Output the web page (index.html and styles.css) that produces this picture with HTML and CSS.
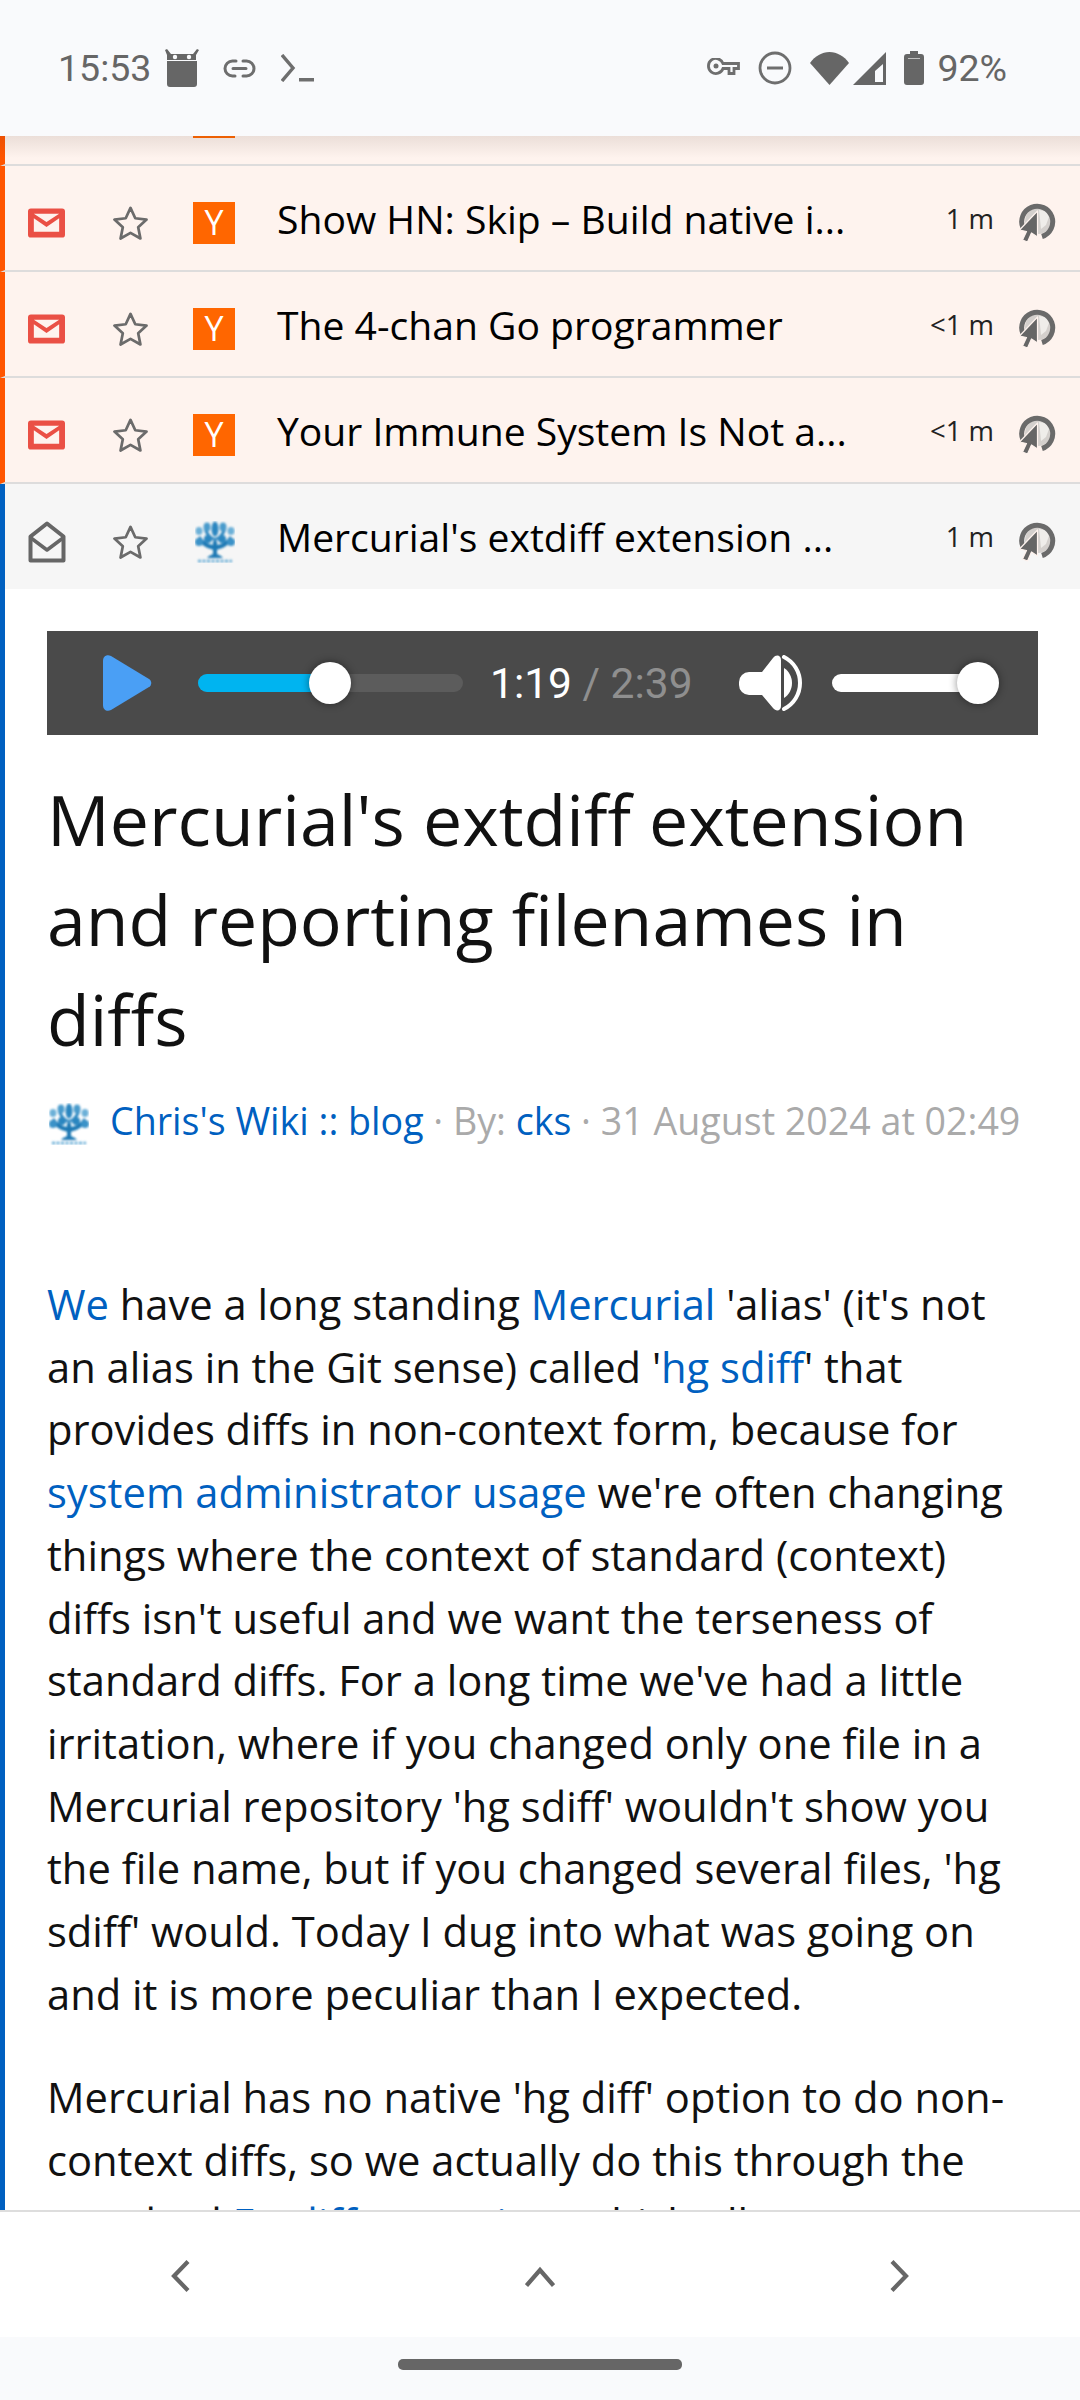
FILE: index.html
```html
<!DOCTYPE html>
<html lang="en">
<head>
<meta charset="utf-8">
<title>Mercurial's extdiff extension</title>
<link rel="stylesheet" href="styles.css">
</head>
<body>
<svg class="defs" width="0" height="0" aria-hidden="true">
  <defs>
    <filter id="soft"><feGaussianBlur stdDeviation="0.8"/></filter>
    <symbol id="star" viewBox="0 0 38 36">
      <path d="M19 2.500l4.900 10.600 11.600 1.400-8.600 7.900 2.300 11.500L19 28.100 8.800 33.900l2.300-11.500-8.600-7.900 11.600-1.400z" fill="none" stroke="#6b6b6b" stroke-width="2.800" stroke-linejoin="round"/>
    </symbol>
    <symbol id="mail" viewBox="0 0 38 30">
      <path fill-rule="evenodd" fill="#ea5045" d="M3 0h32a3 3 0 0 1 3 3v24a3 3 0 0 1-3 3H3a3 3 0 0 1-3-3V3a3 3 0 0 1 3-3zM6 5.500l13 8.500 13-8.500zM6 10v14h26V10l-13 9z"/>
    </symbol>
    <symbol id="mailopen" viewBox="0 0 38 42">
      <path fill="none" stroke="#666" stroke-width="4" stroke-linejoin="round" d="M2.500 39.500V15.500L19 2.500l16.500 13v24z"/>
      <path fill="none" stroke="#666" stroke-width="3.500" stroke-linejoin="round" d="M3 17l16 12 16-12"/>
    </symbol>
    <symbol id="ylogo" viewBox="0 0 42 42">
      <rect width="42" height="42" fill="#f60"/>
      <text x="21" y="33" text-anchor="middle" class="ytext">Y</text>
    </symbol>
    <symbol id="globe" viewBox="0 0 38 40">
      <circle cx="19" cy="18" r="13" fill="#d4d0cd"/>
      <path fill="#efedea" d="M20 7l7 1 3 6-3 8-5 4-1-10z"/>
      <path fill="none" stroke="#6a6a6a" stroke-width="5" d="M4 25a15.500 15.500 0 1 1 19 8.500"/>
      <path fill="#666" stroke="#fef3ee" stroke-width="1.200" stroke-linejoin="round" d="M18.500 8v26l-6-4-4 9-5-2 4-8.500-7-1.500z"/>
    </symbol>
    <symbol id="tree" viewBox="0 0 40 42">
      <g filter="url(#soft)">
        <path d="M18 20h4v17h-4z" fill="#1a78b4"/>
        <path d="M20 29C13 28 7 25 2 18l3-3c4 6 9 9 15 9s11-3 15-9l3 3c-5 7-11 10-18 11z" fill="#1a78b4"/>
        <path d="M20 20C15 18 11 15 9 9l3-1c2 5 4 8 8 9 4-1 6-4 8-9l3 1c-2 6-6 9-11 11z" fill="#2b86c0"/>
        <ellipse cx="20" cy="8" rx="3.500" ry="7.500" fill="#2b86c0"/>
        <ellipse cx="12" cy="6" rx="3.500" ry="4.500" fill="#4a9bcc"/>
        <ellipse cx="28" cy="6" rx="3.500" ry="4.500" fill="#4a9bcc"/>
        <ellipse cx="13" cy="18" rx="4" ry="4" fill="#2b86c0"/>
        <ellipse cx="27" cy="18" rx="4" ry="4" fill="#2b86c0"/>
        <ellipse cx="4" cy="10" rx="3.500" ry="4" fill="#6cb0d8"/>
        <ellipse cx="36" cy="10" rx="3.500" ry="4" fill="#6cb0d8"/>
        <ellipse cx="4" cy="21" rx="4" ry="4" fill="#3a92c8"/>
        <ellipse cx="36" cy="21" rx="4" ry="4" fill="#3a92c8"/>
        <path d="M12 37c3-3 5-4 8-4s5 1 8 4z" fill="#1a78b4"/>
        <path d="M3 40h34" stroke="#5ea8d4" stroke-width="2.500" stroke-dasharray="3 1.500"/>
      </g>
    </symbol>
  </defs>
</svg>

<div class="screen">
  <header class="status">
    <div class="status-side">
      <span class="clock">15:53</span>
      <svg class="s-robot" viewBox="0 0 36 38"><path fill="#666" d="M3 12h30v23a3 3 0 0 1-3 3H6a3 3 0 0 1-3-3zM1 1l2-1 4 5h22l4-5 2 1-3 5v5H3V6z"/><circle cx="11" cy="8" r="2.200" fill="#f9fafc"/><circle cx="25" cy="8" r="2.200" fill="#f9fafc"/></svg>
      <svg class="s-link" viewBox="0 0 33 19"><path fill="none" stroke="#6e6e6e" stroke-width="3" stroke-linecap="round" d="M12 17H9.500a7.500 7.500 0 0 1 0-15H13M20 2h3.500a7.500 7.500 0 0 1 0 15H20M10 9.500h13"/></svg>
      <svg class="s-term" viewBox="0 0 33 28"><path fill="none" stroke="#6e6e6e" stroke-width="3.400" d="M1 1L12 14 1 27"/><path fill="#6e6e6e" d="M18 24h15v3.500H18z"/></svg>
    </div>
    <div class="status-side">
      <svg class="s-key" viewBox="0 0 33 20"><path fill="none" stroke="#6e6e6e" stroke-width="2.800" d="M16 5.500h15.500v5H27v5h-5v-5h-6a7.500 7.500 0 1 1 0-5z"/><circle cx="9" cy="8" r="2.500" fill="#6e6e6e"/></svg>
      <svg class="s-dnd" viewBox="0 0 34 34"><circle cx="17" cy="17" r="15" fill="none" stroke="#6e6e6e" stroke-width="2.800"/><path fill="#6e6e6e" d="M9 15.500h16v3H9z"/></svg>
      <svg class="s-wifi" viewBox="0 0 39 33"><path fill="#666" d="M0 11C5 4 12 0 19.500 0S34 4 39 11L19.500 33z"/></svg>
      <svg class="s-cell" viewBox="0 0 33 33"><path fill="#666" fill-rule="evenodd" d="M33 0v33H0zM30 12l-8 7v11h8z"/></svg>
      <svg class="s-batt" viewBox="0 0 20 34"><path fill="#666" d="M6 0h8v3h3a3 3 0 0 1 3 3v25a3 3 0 0 1-3 3H3a3 3 0 0 1-3-3V6a3 3 0 0 1 3-3h3z"/><path fill="#c0c0c0" d="M4 7h12v1H4z"/></svg>
      <span class="pct">92%</span>
    </div>
  </header>

  <main class="view">
    <div class="list">
      <div class="row unread">
        <svg class="i-mail"><use href="#mail"/></svg>
        <svg class="i-star"><use href="#star"/></svg>
        <svg class="i-feed"><use href="#ylogo"/></svg>
        <span class="title"></span>
        <span class="age"></span>
        <svg class="i-globe"><use href="#globe"/></svg>
      </div>
      <div class="row unread">
        <svg class="i-mail"><use href="#mail"/></svg>
        <svg class="i-star"><use href="#star"/></svg>
        <svg class="i-feed"><use href="#ylogo"/></svg>
        <span class="title">Show HN: Skip – Build native i...</span>
        <span class="age">1 m</span>
        <svg class="i-globe"><use href="#globe"/></svg>
      </div>
      <div class="row unread">
        <svg class="i-mail"><use href="#mail"/></svg>
        <svg class="i-star"><use href="#star"/></svg>
        <svg class="i-feed"><use href="#ylogo"/></svg>
        <span class="title">The 4-chan Go programmer</span>
        <span class="age">&lt;1 m</span>
        <svg class="i-globe"><use href="#globe"/></svg>
      </div>
      <div class="row unread">
        <svg class="i-mail"><use href="#mail"/></svg>
        <svg class="i-star"><use href="#star"/></svg>
        <svg class="i-feed"><use href="#ylogo"/></svg>
        <span class="title">Your Immune System Is Not a...</span>
        <span class="age">&lt;1 m</span>
        <svg class="i-globe"><use href="#globe"/></svg>
      </div>
      <div class="row read">
        <svg class="i-open"><use href="#mailopen"/></svg>
        <svg class="i-star"><use href="#star"/></svg>
        <svg class="i-tree"><use href="#tree"/></svg>
        <span class="title">Mercurial's extdiff extension ...</span>
        <span class="age">1 m</span>
        <svg class="i-globe"><use href="#globe"/></svg>
      </div>
    </div>

    <article class="article">
      <div class="player">
        <svg class="p-play" viewBox="0 0 49 56"><path fill="#4a9ff5" d="M0 6c0-5 4-7 8-5l38 23c3 2 3 6 0 8L8 55c-4 2-8 0-8-5z"/></svg>
        <div class="track seek"><div class="fill seek-fill"></div><div class="knob"></div></div>
        <span class="time">1:19<span class="dur"> / 2:39</span></span>
        <svg class="p-vol" viewBox="0 0 63 56"><path fill="#fff" d="M10 17h13L34 3c3-4 8-3 8 2v46c0 5-5 6-8 2L23 40H10a10 10 0 0 1-10-10v-3a10 10 0 0 1 10-10z"/><path fill="#fff" d="M45 13c5 3 8 9 8 15s-3 12-8 15z"/><path fill="none" stroke="#fff" stroke-width="4" stroke-linecap="round" d="M45 2c10 5 16 15 16 26s-6 21-16 26"/></svg>
        <div class="track vol"><div class="knob"></div></div>
      </div>

      <h1 class="headline">Mercurial's extdiff extension and reporting filenames in diffs</h1>

      <div class="byline">
        <svg class="i-tree"><use href="#tree"/></svg>
        <a class="lnk">Chris's Wiki :: blog</a><span class="sep"> · By: </span><a class="lnk">cks</a><span class="sep"> · 31 August 2024 at 02:49</span>
      </div>

      <p class="para first"><a class="lnk">We</a> have a long standing <a class="lnk">Mercurial</a> 'alias' (it's not an alias in the Git sense) called '<a class="lnk">hg sdiff</a>' that provides diffs in non-context form, because for <a class="lnk">system administrator usage</a> we're often changing things where the context of standard (context) diffs isn't useful and we want the terseness of standard diffs. For a long time we've had a little irritation, where if you changed only one file in a Mercurial repository 'hg sdiff' wouldn't show you the file name, but if you changed several files, 'hg sdiff' would. Today I dug into what was going on and it is more peculiar than I expected.</p>
      <p class="para">Mercurial has no native 'hg diff' option to do non-context diffs, so we actually do this through the standard <a class="lnk">Extdiff extension</a>, which allows</p>
    </article>
    <div class="status-shadow"></div>
  </main>

  <nav class="nav">
    <svg class="n-side" viewBox="0 0 20 32"><path fill="none" stroke="#666" stroke-width="4.200" d="M18 1.500L4 16l14 14.500"/></svg>
    <svg class="n-up" viewBox="0 0 30 21"><path fill="none" stroke="#666" stroke-width="4.200" d="M1.500 19.500L15 4l13.500 15.500"/></svg>
    <svg class="n-side" viewBox="0 0 20 32"><path fill="none" stroke="#666" stroke-width="4.200" d="M2 1.500L16 16 2 30.500"/></svg>
  </nav>
  <div class="gesture"><span class="pill"></span></div>
</div>
</body>
</html>
```

FILE: styles.css
```css
* { box-sizing: border-box; }
html, body { margin: 0; padding: 0; }
body { font-family: "Open Sans", sans-serif; background: #fff; color: #000; }
.defs { position: absolute; }
.ytext { font-family: "Open Sans", sans-serif; font-size: 34px; fill: #fff; }

.screen { width: 1080px; height: 2400px; display: flex; flex-direction: column; overflow: hidden; }

.status { flex: 0 0 136px; height: 136px; background: #f9fafc; display: flex; justify-content: space-between; align-items: center; padding: 0 73px 0 58px; color: #666; font-family: Roboto, sans-serif; font-size: 37.500px; }
.status-side { display: flex; align-items: center; }
.s-robot { width: 36px; height: 38px; margin-left: 13px; }
.s-link { width: 33px; height: 19px; margin-left: 23px; }
.s-term { width: 33px; height: 28px; margin-left: 25px; }
.s-key { width: 33px; height: 20px; margin-right: 18px; }
.s-dnd { width: 34px; height: 34px; margin-right: 18px; }
.s-wifi { width: 39px; height: 33px; margin-right: 4px; }
.s-cell { width: 33px; height: 33px; margin-right: 18px; }
.s-batt { width: 20px; height: 34px; margin-right: 13px; }

.view { flex: 1; min-height: 0; position: relative; overflow: hidden; display: flex; flex-direction: column; }
.status-shadow { position: absolute; left: 0; right: 0; top: 0; height: 22px; background: linear-gradient(rgba(70,40,25,.1), rgba(70,40,25,0)); }
.list { margin-top: -76px; flex: none; }

.row { flex: none; height: 106px; display: flex; align-items: center; border-bottom: 2px solid #dddcdc; border-left: 5px solid #f50; }
.row.unread { background: #fef3ee; }
.row.read { background: #f6f6f6; border-bottom: 0; border-left-color: #0060c0; height: 105px; }
.row svg { flex: none; margin-top: 10px; }
.i-mail { width: 37px; height: 30px; margin-left: 23px; }
.i-open { width: 38px; height: 42px; margin-left: 23px; margin-right: -1px; }
.i-star { width: 37px; height: 36px; margin-left: 47px; }
.i-feed { width: 42px; height: 42px; margin-left: 44px; }
.row .i-tree { margin-left: 46px; }
.i-tree { width: 40px; height: 42px; }
.title { flex: 1; margin-left: 42px; font-size: 39.100px; white-space: nowrap; }
.age { font-size: 27.500px; color: #222; margin-right: 25px; }
.i-globe { width: 38px; height: 40px; margin-right: 23px; }

.article { flex: 1 0 auto; border-left: 5px solid #0060c0; padding: 42px 42px 0 42px; }
.player { height: 104px; background: #4a4a4a; display: flex; align-items: center; padding-left: 56px; }
.p-play { width: 49px; height: 56px; flex: none; }
.track { position: relative; height: 18px; border-radius: 9px; }
.seek { width: 265px; margin-left: 46px; background: #5c5c5c; }
.seek-fill { width: 132px; background: #00b4f0; }
.vol { width: 145px; margin-left: 30px; background: #fff; }
.fill { height: 100%; border-radius: 9px; }
.knob { position: absolute; top: -12px; width: 42px; height: 42px; border-radius: 50%; background: #fff; box-shadow: 0 0 8px rgba(0,0,0,.45); }
.seek .knob { left: 111px; }
.vol .knob { left: 125px; }
.time { font-family: Roboto, sans-serif; font-size: 42.500px; color: #fff; margin-left: 27px; white-space: nowrap; }
.dur { color: #8f8f8f; }
.p-vol { width: 63px; height: 56px; margin-left: 46px; flex: none; }

.headline { font-size: 69.800px; line-height: 100px; font-weight: 400; margin: 34px 0 0 0; color: #111; }
.byline { display: flex; align-items: center; margin-top: 26px; font-size: 37.600px; color: #aaa; white-space: pre; }
.byline .i-tree { margin: 6px 21px 0 2px; }
.lnk { color: #0060c0; }
.sep { color: #aaa; }
.para { font-size: 41.700px; line-height: 62.700px; margin: 0 18px 41px 0; color: #111; }
.para.first { margin-top: 127px; }

.nav { flex: 0 0 127px; height: 127px; border-top: 2px solid #ddd; background: #fff; display: flex; justify-content: space-between; align-items: center; padding: 3px 170px 0; }
.n-side { width: 20px; height: 32px; }
.n-up { width: 30px; height: 21px; }
.gesture { flex: 0 0 63px; height: 63px; background: #f9fafc; display: flex; align-items: center; justify-content: center; padding-bottom: 8px; }
.pill { width: 284px; height: 11px; border-radius: 5px; background: #666; }
```
